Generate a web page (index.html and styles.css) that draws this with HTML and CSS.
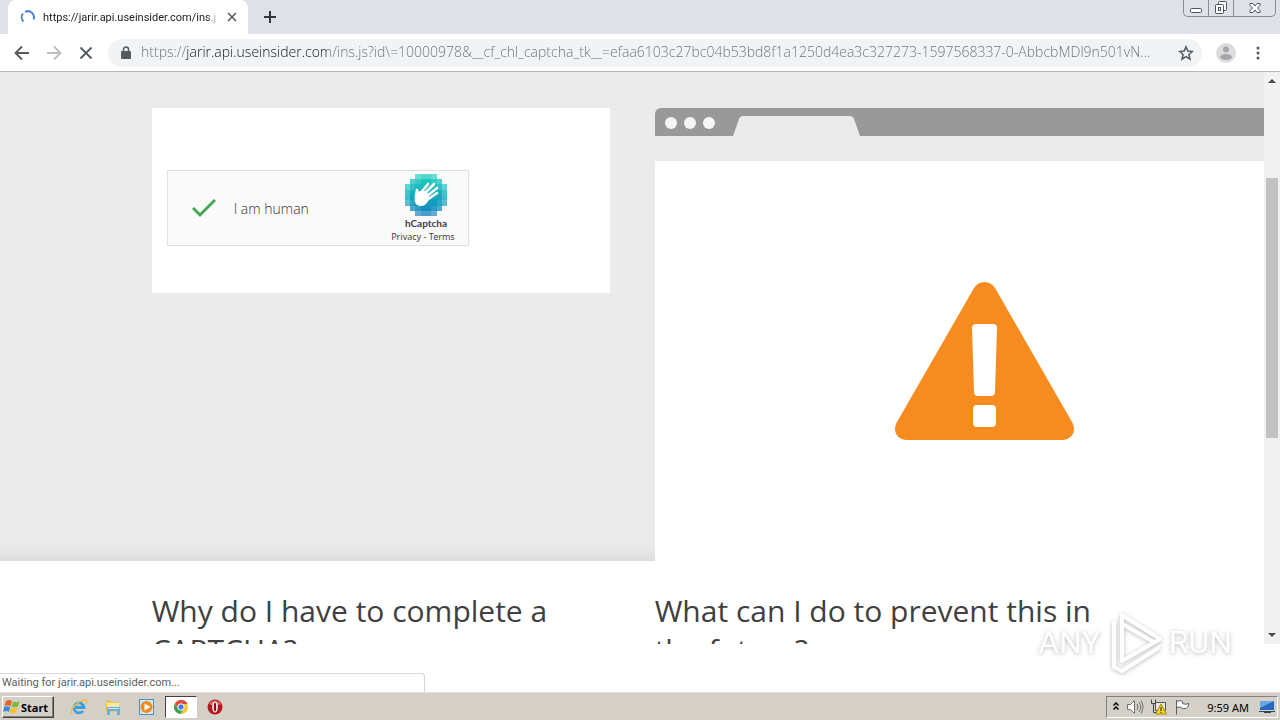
FILE: index.html
```html
<!DOCTYPE html>
<html lang="en">
<head>
<meta charset="utf-8">
<title>Browser</title>
<link rel="stylesheet" href="styles.css">
</head>
<body>
<header class="tabstrip">
  <div class="tab">
    <svg class="spinner" width="16" height="16" viewBox="0 0 16 16" fill="none" stroke="#4d86d6" stroke-width="2"><path d="M3.500 12.500A6 6 0 0 1 3 4.500M5 3A6 6 0 0 1 13.500 10.500"/></svg>
    <span class="tab-title">https://jarir.api.useinsider.com/ins.j</span>
    <button class="icon-btn tab-close" aria-label="Close tab"><svg width="12" height="12" viewBox="0 0 12 12" stroke="#5a5d61" stroke-width="1.700"><path d="M2 2l8 8M10 2l-8 8"/></svg></button>
  </div>
  <button class="icon-btn new-tab" aria-label="New tab"><svg width="14" height="14" viewBox="0 0 14 14" stroke="#33363a" stroke-width="2"><path d="M7 1v12M1 7h12"/></svg></button>
  <div class="window-controls">
    <button class="win-btn" aria-label="Minimize"><svg width="14" height="14" viewBox="0 0 14 14" fill="#fff" stroke="#4a5260"><rect x="1.500" y="7.500" width="11" height="4" rx="1"/></svg></button>
    <button class="win-btn" aria-label="Restore"><svg width="14" height="14" viewBox="0 0 14 14" fill="#fff" stroke="#4a5260"><rect x="4.500" y=".5" width="8" height="9" rx="1"/><rect x="1.500" y="3.500" width="8" height="9" rx="1"/><rect x="4.500" y="6.500" width="2" height="3"/></svg></button>
    <button class="win-btn win-close" aria-label="Close"><svg width="14" height="12" viewBox="0 0 14 12" fill="#fff" stroke="#4a5260"><path d="M2 1.500h3l2 2.500 2-2.500h3v2L9.500 6l2.500 2.500v2H9L7 8l-2 2.500H2v-2L4.500 6 2 3.500z"/></svg></button>
  </div>
</header>

<nav class="toolbar">
  <button class="icon-btn nav-btn" aria-label="Back"><svg width="16" height="16" viewBox="0 0 16 16" fill="none" stroke="#55585c" stroke-width="1.800"><path d="M15 8H2M8 1.500L1.500 8 8 14.500"/></svg></button>
  <button class="icon-btn nav-btn" aria-label="Forward"><svg width="16" height="16" viewBox="0 0 16 16" fill="none" stroke="#b9bbbe" stroke-width="1.800"><path d="M1 8h13M8 1.500L14.500 8 8 14.500"/></svg></button>
  <button class="icon-btn nav-btn" aria-label="Stop loading"><svg width="14" height="14" viewBox="0 0 14 14" stroke="#55585c" stroke-width="1.800"><path d="M1.500 1.500l11 11M12.500 1.500l-11 11"/></svg></button>
  <div class="omnibox">
    <svg width="10" height="14" viewBox="0 0 10 14"><rect x="0" y="5" width="10" height="8" rx="1" fill="#55585c"/><path d="M2.500 6V3.500a2.500 2.500 0 0 1 5 0V6" fill="none" stroke="#55585c" stroke-width="1.500"/></svg>
    <input class="url" type="text" aria-label="Address" value="https://jarir.api.useinsider.com/ins.js?id\=10000978&amp;__cf_chl_captcha_tk__=efaa6103c27bc04b53bd8f1a1250d4ea3c327273-1597568337-0-AbbcbMDl9n501vN...">
    <button class="icon-btn star" aria-label="Bookmark"><svg width="16" height="16" viewBox="0 0 16 16" fill="none" stroke="#55585c" stroke-width="1.500"><path d="M8 1.800l1.800 4.300 4.600.4-3.500 3 1.100 4.600L8 11.700l-4 2.400 1.100-4.600-3.500-3 4.600-.4z"/></svg></button>
  </div>
  <button class="icon-btn" aria-label="Profile"><svg width="20" height="20" viewBox="0 0 20 20"><circle cx="10" cy="10" r="10" fill="#dcdcde"/><circle cx="10" cy="6.500" r="3" fill="#a3a5a8"/><ellipse cx="10" cy="14" rx="6" ry="3" fill="#a3a5a8"/></svg></button>
  <button class="icon-btn menu" aria-label="Menu"><svg width="4" height="14" viewBox="0 0 4 14" fill="#55585c"><circle cx="2" cy="2" r="1.500"/><circle cx="2" cy="7" r="1.500"/><circle cx="2" cy="12" r="1.500"/></svg></button>
</nav>

<div class="viewport">
  <main class="page">
    <section class="hero">
      <div class="captcha-card">
        <div class="captcha">
          <label class="human"><input class="check" type="checkbox" checked><span>I am human</span></label>
          <div class="brand">
            <svg width="42" height="42" viewBox="0 0 42 42">
              <defs><linearGradient id="teal" x1="0" y1="0" x2="0" y2="1"><stop offset="0" stop-color="#24d2bd"/><stop offset=".5" stop-color="#10aebd"/><stop offset="1" stop-color="#197fc0"/></linearGradient></defs>
              <path fill="url(#teal)" d="M10 0h22v5h5v5h5v22h-5v5h-5v5H10v-5H5v-5H0V10h5V5h5z"/>
              <g fill="#fff">
                <path opacity=".32" d="M10 0h6v5h-6zM26 0h6v5h-6zM0 10h5v6H0zM37 10h5v6h-5zM0 26h5v6H0zM37 26h5v6h-5zM10 37h6v5h-6zM26 37h6v5h-6z"/>
                <path opacity=".22" d="M16 0h10v5H16zM5 5h5v5H5zM32 5h5v5h-5zM0 16h5v10H0zM37 16h5v10h-5zM5 32h5v5H5zM32 32h5v5h-5zM16 37h10v5H16z"/>
                <path opacity=".1" d="M10 5h6v5h-6zM26 5h6v5h-6zM5 10h5v6H5zM32 10h5v6h-5zM5 26h5v6H5zM32 26h5v6h-5zM10 32h6v5h-6zM26 32h6v5h-6z"/>
                <path d="M10 20c3-4 10-4 13-1 3 5-1 13-7 13s-7-4-6-12z"/>
              </g>
              <path d="M11 23l1-7M15 20l8-10M18 21l11-11M21 23l11-9M22 26l10-7" stroke="#fff" stroke-width="2.600" stroke-linecap="round"/>
            </svg>
            <strong class="brand-name">hCaptcha</strong>
            <span class="legal"><a href="#">Privacy</a> - <a href="#">Terms</a></span>
          </div>
        </div>
      </div>
      <div class="mock">
        <div class="mock-bar"><i class="dot"></i><i class="dot"></i><i class="dot"></i>
          <svg class="mock-tab" width="128" height="20" viewBox="0 0 128 20"><path d="M0 20L6 3q1-3 4-3h107q3 0 4 3l6 17z" fill="#ebebeb"/></svg>
        </div>
        <div class="mock-body">
          <svg width="179" height="158" viewBox="0 0 179 158"><path fill="#f68b1f" d="M79 6c5-8 16-8 21 0l77 134c5 9 0 18-10 18H12c-10 0-15-9-10-18z"/><rect x="78" y="123" width="23" height="22" rx="4" fill="#fff"/><path fill="#fff" d="M81 42h17q4 0 4 4l-2 64q0 4-4 4H83q-4 0-4-4l-2-64q0-4 4-4z"/></svg>
        </div>
      </div>
    </section>
    <section class="faq">
      <h2>Why do I have to complete a CAPTCHA?</h2>
      <h2>What can I do to prevent this in the future?</h2>
    </section>
  </main>
  <div class="scrollbar">
    <svg width="8" height="4" viewBox="0 0 8 4"><path d="M0 4l4-4 4 4z" fill="#45494d"/></svg>
    <div class="thumb"></div>
    <svg width="8" height="4" viewBox="0 0 8 4"><path d="M0 0h8L4 4z" fill="#45494d"/></svg>
  </div>
</div>

<div class="below"><div class="status">Waiting for jarir.api.useinsider.com...</div></div>

<footer class="taskbar">
  <button class="start"><svg width="17" height="16" viewBox="0 0 17 16"><path d="M3 2q3-2 6 0L7.500 7q-3-1.500-6 0z" fill="#e8602c"/><path d="M10 2.500q3 1.500 6.500 0L15 7.500q-3 1.500-6.500 0z" fill="#80b83c"/><path d="M1.200 8q3-1.500 6 0L6 13q-3-2-6 0z" fill="#3d8ad8"/><path d="M8.200 8.500q3 1.500 6.500 0L13 13.500q-3 1.500-6.300 0z" fill="#f6c128"/></svg>Start</button>
  <button class="task" aria-label="Internet Explorer"><svg width="18" height="18" viewBox="0 0 18 18" fill="none"><path d="M4.500 9.500h9.500a5 5 0 1 0-1 3.500" stroke="#3da0e4" stroke-width="2.800"/><path d="M2 15.500C-1 12 10 1 16 2q1.500 1 0 4" stroke="#f1bd35" stroke-width="1.400"/></svg></button>
  <button class="task" aria-label="Explorer"><svg width="18" height="18" viewBox="0 0 18 18"><path d="M2 2h5l1 2h7v10H2z" fill="#e9c75c"/><path d="M3 5h12v7H3z" fill="#f9e9a2"/><path d="M3 9h13v8h-3v-4H6v4H3z" fill="#63b2df"/><path d="M4 10h11v1H4z" fill="#c2e8f8"/></svg></button>
  <button class="task" aria-label="Media Player"><svg width="18" height="18" viewBox="0 0 18 18"><rect x="1.500" y="1.500" width="14" height="15" fill="#d4e9f8" stroke="#4c92c9"/><circle cx="8.500" cy="9" r="6" fill="#f28a1d"/><path d="M6.500 5.500l6 3.500-6 3.500z" fill="#fff"/></svg></button>
  <button class="task active" aria-label="Chrome"><svg width="16" height="16" viewBox="0 0 16 16"><circle cx="8" cy="8" r="7" fill="#f3c72e"/><path d="M2 4.500A7 7 0 0 1 14.500 5H8L5 9z" fill="#df4a3d"/><path d="M2 4.500A7 7 0 0 0 7.500 15L10 10H5z" fill="#35a256"/><circle cx="8" cy="8" r="3.200" fill="#3f80e8" stroke="#fff"/></svg></button>
  <button class="task" aria-label="Opera"><svg width="16" height="16" viewBox="0 0 16 16"><circle cx="8" cy="8" r="7.500" fill="#b8161c"/><path d="M2 5a7 7 0 0 1 12 0q-6 3-12 0z" fill="#df6663"/><ellipse cx="8" cy="8" rx="2.800" ry="5.500" fill="#fff"/><ellipse cx="8" cy="8" rx="1.200" ry="4.500" fill="#8e0c12"/></svg></button>
  <div class="tray">
    <svg width="8" height="12" viewBox="0 0 8 12" fill="none" stroke="#000" stroke-width="1.500"><path d="M1.500 4.500L4 2l2.500 2.500M1.500 8.500L4 6l2.500 2.500"/></svg>
    <svg width="18" height="16" viewBox="0 0 18 16" fill="#fff" stroke="#707070"><path d="M1.500 5.500h3l4-4v13l-4-4h-3z"/><path fill="none" d="M11 5q2 3 0 6M13 3q3.500 5 0 10M15 1.500q4 6.500 0 13"/></svg>
    <svg width="18" height="16" viewBox="0 0 18 16"><path d="M5.500 3.500h10v8h-10z" fill="#e6e6e6" stroke="#555"/><path d="M1.500.5v4h4v-4M3.500 5v8.500h5" fill="none" stroke="#444"/><path d="M11 5l5.500 10h-11z" fill="#f6d51d" stroke="#a88a08"/><path d="M11 8v4M11 13v1" stroke="#222"/></svg>
    <svg width="18" height="16" viewBox="0 0 18 16" fill="#fff" stroke="#606060"><path d="M2.500 1v14.500M2.500 2.500q4-2 6 0v2q3 1.500 6.500 0-1 4-3 5-3 1-5-1-2-1-4.500 0z"/></svg>
    <time>9:59 AM</time>
    <svg width="16" height="14" viewBox="0 0 16 14"><path d="M1 1h14v9H1z" fill="#2868ba"/><path d="M1 1h14L1 8z" fill="#68a6e4"/><path d="M0 11h16v1H0zM5 12h7v1H5z" fill="#345"/></svg>
  </div>
</footer>

<div class="watermark"><span>ANY</span>
  <svg width="60" height="64" viewBox="0 0 60 64" fill="none" stroke="#fff" stroke-width="4" stroke-linejoin="round"><path d="M17 5v46l38-22zM9 11v46l8 4 38-24M17 14l32 18"/></svg>
  <span>RUN</span></div>
</body>
</html>
```
FILE: styles.css
```css
* { box-sizing: border-box; }
body {
  margin: 0;
  height: 100vh;
  display: flex;
  flex-direction: column;
  overflow: hidden;
  position: relative;
  background: #fff;
  color: #404040;
  font-family: "Open Sans", sans-serif;
}
svg { display: block; flex: none; }
button { font: inherit; padding: 0; border: 0; background: none; color: inherit; }
.icon-btn { display: flex; align-items: center; justify-content: center; flex: none; }

.tabstrip {
  flex: none;
  height: 34px;
  display: flex;
  align-items: flex-start;
  padding-left: 8px;
  background: #dee1e8;
}
.tab {
  width: 240px;
  height: 34px;
  display: flex;
  align-items: center;
  padding: 0 10px 0 12px;
  background: #fff;
  border-radius: 8px 8px 0 0;
}
.tab-title {
  flex: 1;
  min-width: 0;
  margin: 0 8px 0 7px;
  overflow: hidden;
  white-space: nowrap;
  color: #222;
  font-size: 11px;
  font-family: Roboto, sans-serif;
  mask-image: linear-gradient(to right, #000 94%, transparent);
}
.new-tab { width: 28px; height: 34px; margin-left: 8px; }
.window-controls {
  display: flex;
  height: 17px;
  margin: 0 4px 0 auto;
  border: 1px solid #858c98;
  border-top: 0;
  border-radius: 0 0 5px 5px;
}
.win-btn { width: 25px; display: flex; align-items: center; justify-content: center; border-right: 1px solid #858c98; }
.win-close { width: 41px; border-right: 0; }

.toolbar {
  flex: none;
  height: 38px;
  display: flex;
  align-items: center;
  padding: 0 14px 0 6px;
  background: #fff;
  border-bottom: 1px solid #b5b5b5;
}
.nav-btn { width: 32px; height: 32px; }
.omnibox {
  flex: 1;
  height: 28px;
  display: flex;
  align-items: center;
  margin: 0 14px 0 6px;
  padding: 0 8px 0 13px;
  border-radius: 14px;
  background: #f1f3f5;
}
.url {
  flex: 1;
  min-width: 0;
  margin: 0 12px 0 10px;
  padding: 0 0 2px;
  border: 0;
  outline: 0;
  color: #6c7074;
  font: 300 14px "Open Sans", sans-serif;
  background: linear-gradient(to right, #6c7074 45px, #15171a 45px, #15171a 186px, #6c7074 186px);
  -webkit-background-clip: text;
  background-clip: text;
  -webkit-text-fill-color: transparent;
}
.menu { width: 16px; margin-left: 14px; }

.viewport { flex: 1; min-height: 0; display: flex; }
.page { flex: 1; min-width: 0; overflow: hidden; }
.hero, .faq {
  display: grid;
  grid-template-columns: 458px 1fr;
  column-gap: 45px;
  padding-left: 12%;
}
.hero {
  padding-top: 36px;
  align-items: start;
  background: linear-gradient(to top, #dcdcdc, #e3e3e3 6px, #ebebeb 18px);
}
.captcha-card { padding: 62px 15px 47px; background: #fff; }
.captcha {
  width: 302px;
  height: 76px;
  display: flex;
  justify-content: space-between;
  padding: 3px 13px 0 24px;
  background: #fafafa;
  border: 1px solid #e0e0e0;
}
.human { display: flex; align-items: center; gap: 18px; padding-bottom: 3px; font-size: 14px; font-weight: 300; color: #333; }
.check {
  appearance: none;
  width: 24px;
  height: 20px;
  margin: 0;
  background: url("data:image/svg+xml,%3Csvg xmlns='http://www.w3.org/2000/svg' viewBox='0 0 24 20'%3E%3Cpath d='M1 10l7 7L23 2' fill='none' stroke='%2343a856' stroke-width='3'/%3E%3C/svg%3E");
}
.brand { display: flex; flex-direction: column; align-items: center; }
.brand svg { margin-left: 6px; }
.brand-name { margin-left: 6px; font: bold 10px/15px Lato, sans-serif; color: #40404f; }
.legal { font: 9px/12px "Noto Sans", sans-serif; color: #444; white-space: nowrap; }
.legal a { color: inherit; text-decoration: none; }

.mock-bar {
  height: 28px;
  display: flex;
  align-items: center;
  gap: 7px;
  padding: 2px 0 0 10px;
  background: #999;
  border-radius: 6px 0 0 0;
}
.dot { width: 12px; height: 12px; border-radius: 50%; background: #f5f5f5; }
.mock-tab { align-self: flex-end; margin-left: 11px; }
.mock-body {
  height: 400px;
  margin-top: 25px;
  padding-left: 50px;
  display: flex;
  align-items: center;
  justify-content: center;
  background: #fff;
}
.faq { padding-top: 30px; }
.faq h2 { max-width: 458px; margin: 0; font-size: 30px; line-height: 39px; font-weight: 400; }

.scrollbar {
  width: 16px;
  display: flex;
  flex-direction: column;
  align-items: center;
  padding: 7px 0;
  background: #f1f1f1;
}
.thumb { width: 12px; height: 260px; margin: 95px 0 auto; background: #c1c1c1; }

.below { flex: none; height: 48px; display: flex; align-items: flex-end; }
.status {
  width: 425px;
  height: 19px;
  padding-left: 2px;
  border: 1px solid #d6d6d6;
  border-width: 1px 1px 0 0;
  border-radius: 0 4px 0 0;
  font: 11px/18px Roboto, sans-serif;
  color: #606060;
}

.taskbar {
  flex: none;
  height: 28px;
  display: flex;
  align-items: center;
  padding: 1px 0 0 2px;
  background: #d4d0c8;
  border-top: 1px solid #e4e1da;
  color: #000;
}
.start {
  width: 52px;
  height: 22px;
  margin-right: 9px;
  display: flex;
  align-items: center;
  gap: 1px;
  border: 1px solid;
  border-color: #fff #404040 #404040 #fff;
  box-shadow: inset -1px -1px #808080;
  font: bold 11px "Noto Sans", sans-serif;
}
.task { width: 32px; height: 22px; margin-right: 2px; display: flex; align-items: center; justify-content: center; }
.active { background: #fff; border: 1px solid; border-color: #404040 #fff #fff #404040; }
.tray {
  height: 22px;
  margin-left: auto;
  margin-right: 2px;
  padding: 0 2px 0 5px;
  display: flex;
  align-items: center;
  gap: 6px;
  border: 1px solid;
  border-color: #808080 #fff #fff #808080;
}
.tray time { font: 11px "Noto Sans", sans-serif; margin: 0 4px 0 9px; white-space: nowrap; }

.watermark {
  position: absolute;
  right: 48px;
  bottom: 46px;
  display: flex;
  align-items: center;
  gap: 4px;
  color: #fff;
  font: 32px Roboto, sans-serif;
  filter: drop-shadow(0 1px 2px #bbb);
}
```
